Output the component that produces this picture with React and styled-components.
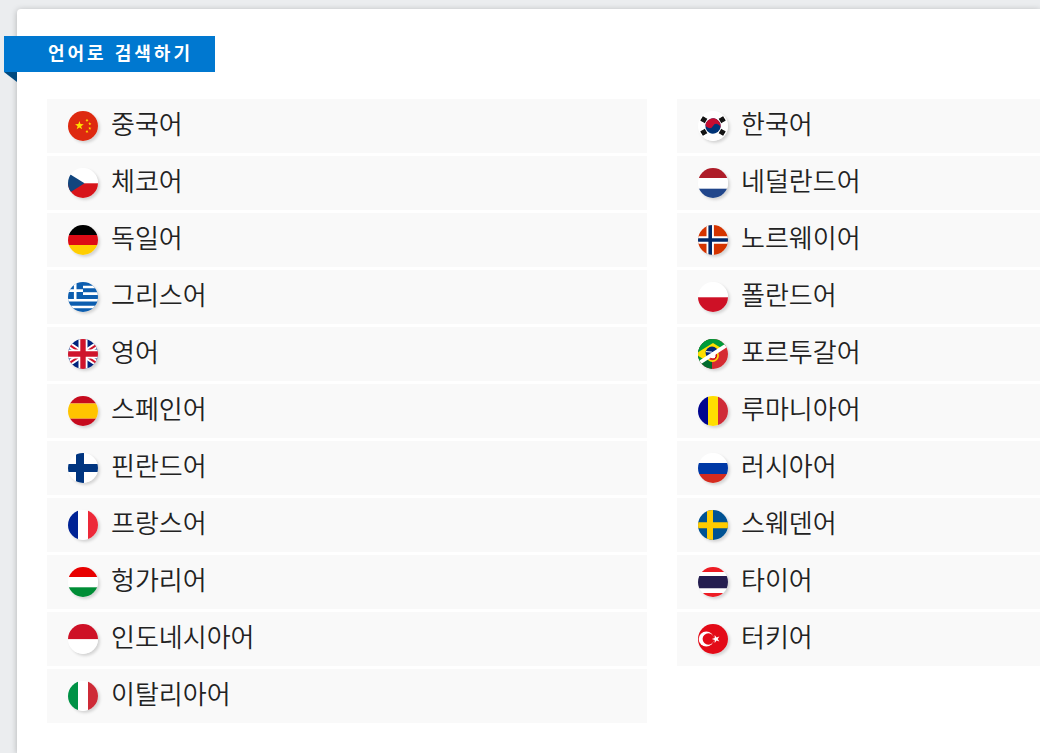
import React from 'react'
import styled, { createGlobalStyle } from 'styled-components'

const GlobalStyle = createGlobalStyle`
  * {
    box-sizing: border-box;
  }

  body {
    margin: 0;
    background-color: #ebedef;
    color: #222;
    font-family: 'Noto Sans CJK KR', 'Noto Sans', sans-serif;
  }
`

const Page = styled.div`
  padding: 9px 0 0 17px;
  overflow: hidden;
`

const Card = styled.main`
  min-height: calc(100vh - 9px);
  padding: 27px 0 30px 30px;
  background-color: #fff;
  border-top-left-radius: 4px;
  box-shadow: 0 1px 6px rgba(0, 0, 0, 0.25);
`

// hangs over the left edge of the card, the fold sits underneath
const Ribbon = styled.h2`
  position: relative;
  width: fit-content;
  height: 36px;
  margin: 0 0 27px -43px;
  padding: 0 22px 0 44px;
  background-color: #0078d0;
  color: #fff;
  font-size: 18px;
  font-weight: 700;
  letter-spacing: 3px;
  line-height: 32px;

  &::after {
    content: '';
    position: absolute;
    top: 100%;
    left: 0;
    border-top: 10px solid #004a80;
    border-left: 13px solid transparent;
  }
`

const Columns = styled.div`
  display: grid;
  grid-template-columns: minmax(0, 600px) minmax(0, 1fr);
  column-gap: 30px;
  align-items: start;
`

const LanguageList = styled.ul`
  display: grid;
  row-gap: 3px;
  margin: 0;
  padding: 0;
  list-style: none;
`

const LanguageLink = styled.a`
  display: flex;
  align-items: center;
  gap: 13px;
  height: 54px;
  padding-left: 21px;
  background-color: #f9f9f9;
  color: inherit;
  text-decoration: none;
`

const LanguageName = styled.span`
  padding-bottom: 6px;
  font-size: 26px;
  font-weight: 350;
  line-height: 36px;
  white-space: nowrap;
`

const FlagIcon = styled.svg`
  flex: none;
  width: 30px;
  height: 30px;
  border-radius: 50%;
  box-shadow: 2px 2px 3px rgba(0, 0, 0, 0.15);
`

const Rows = ({ colors, stops = [10, 20] }) => {
  const edges = [0, ...stops, 30]
  return colors.map((color, i) => (
    <rect key={i} y={edges[i]} width='30' height={edges[i + 1] - edges[i]} fill={color} />
  ))
}

const Bars = ({ colors }) => colors.map((color, i) => (
  <rect key={i} x={i * 10} width='10' height='30' fill={color} />
))

const starPoints = (cx, cy, r, turn = -90) => {
  const points = []
  for (let i = 0; i < 10; i++) {
    const angle = (turn + i * 36) * Math.PI / 180
    const radius = i % 2 ? r * 0.4 : r
    points.push(`${cx + radius * Math.cos(angle)},${cy + radius * Math.sin(angle)}`)
  }
  return points.join(' ')
}

const flags = {
  cn: (
    <>
      <rect width='30' height='30' fill='#de2910' />
      <g fill='#ffde00'>
        <polygon points={starPoints(11.4, 14.6, 4.6)} />
        <polygon points={starPoints(19, 9.5, 1.7, 20)} />
        <polygon points={starPoints(21.8, 12.8, 1.7, 50)} />
        <polygon points={starPoints(21.8, 17.4, 1.7)} />
        <polygon points={starPoints(19, 20.6, 1.7, 20)} />
      </g>
    </>
  ),
  cz: (
    <>
      <Rows colors={['#fff', '#d7141a']} stops={[15.3]} />
      <path d='M-8 0 16.5 15.3-8 31Z' fill='#11457e' />
    </>
  ),
  de: <Rows colors={['#000', '#dd0b15', '#ffce00']} />,
  gr: (
    <>
      <rect width='30' height='30' fill='#0d5eaf' />
      <path d='M15 5h15M15 11.6h15M0 18.3h30M0 25h30M0 8.6h15M7.2 0v17' stroke='#fff' strokeWidth='2.6' />
    </>
  ),
  gb: (
    <>
      <rect width='30' height='30' fill='#00247d' />
      <path d='M-3 3 33 27M33 3-3 27' stroke='#fff' strokeWidth='6' />
      <path d='M-3 3 33 27M33 3-3 27' stroke='#cf142b' strokeWidth='2' />
      <path d='M15 0v30M0 15h30' stroke='#fff' strokeWidth='9' />
      <path d='M15 0v30M0 15h30' stroke='#cf142b' strokeWidth='5.4' />
    </>
  ),
  es: <Rows colors={['#c60b1e', '#ffc400', '#c60b1e']} stops={[7.5, 22.7]} />,
  fi: (
    <>
      <rect width='30' height='30' fill='#fff' />
      <path d='M12 0v30M0 15h30' stroke='#003580' strokeWidth='8' />
    </>
  ),
  fr: <Bars colors={['#002395', '#fff', '#ed2939']} />,
  hu: <Rows colors={['#e80000', '#fff', '#008d36']} stops={[10, 20.3]} />,
  id: <Rows colors={['#ce1126', '#fff']} stops={[15.3]} />,
  it: <Bars colors={['#009246', '#fff', '#ce2b37']} />,
  kr: (
    <>
      <rect width='30' height='30' fill='#fff' />
      <g transform='rotate(28 15 15)'>
        <circle cx='15' cy='15' r='7.7' fill='#003478' />
        <path d='M7.3 15a7.7 7.7 0 0 1 15.4 0a3.85 3.85 0 0 0-7.7 0a3.85 3.85 0 0 1-7.7 0Z' fill='#c60c30' />
      </g>
      <g stroke='#111' strokeWidth='1.7'>
        <path d='M3 10 5.6 5.6M4.5 10.9 7.1 6.5M6 11.8 8.6 7.4' />
        <path d='M27 10 24.4 5.6M25.5 10.9 22.9 6.5M24 11.8 21.4 7.4' />
        <path d='M3 20 5.6 24.4M4.5 19.1 7.1 23.5M6 18.2 8.6 22.6' />
        <path d='M27 20 24.4 24.4M25.5 19.1 22.9 23.5M24 18.2 21.4 22.6' />
      </g>
    </>
  ),
  nl: <Rows colors={['#ae1c28', '#fff', '#21468b']} stops={[10, 20.7]} />,
  no: (
    <>
      <rect width='30' height='30' fill='#d43400' />
      <path d='M12.2 0v30M0 15h30' stroke='#fff' strokeWidth='7.4' />
      <path d='M12.2 0v30M0 15h30' stroke='#002868' strokeWidth='3.6' />
    </>
  ),
  pl: <Rows colors={['#fff', '#ce1126']} stops={[15.3]} />,
  // Brazil above the diagonal, Portugal below it
  pt: (
    <>
      <clipPath id='pt-upper'>
        <path d='M0 0H30V5.2L0 24.8Z' />
      </clipPath>
      <rect width='30' height='30' fill='#d52b32' />
      <rect width='14' height='30' fill='#006b2d' />
      <circle cx='14.5' cy='16.5' r='5.6' fill='#d52b32' stroke='#ffe000' strokeWidth='1.6' />
      <path d='M12 14h6v4q-3 4-6 0Z' fill='#fff' stroke='#d00000' strokeWidth='1' />
      <g clipPath='url(#pt-upper)'>
        <rect width='30' height='30' fill='#009b3a' />
        <path d='M15 4 33 15 15 26-3 15Z' fill='#fedf00' />
        <circle cx='14' cy='14' r='6.4' fill='#002776' />
        <path d='M8 12.6q6-1 10 4' fill='none' stroke='#fff' strokeWidth='1' />
      </g>
      <path d='M-1 25.5 31 4.5' stroke='#fff' strokeWidth='3.8' />
    </>
  ),
  ro: <Bars colors={['#00058f', '#ffde00', '#cf2b37']} />,
  ru: <Rows colors={['#fff', '#0039a6', '#d52b1e']} stops={[10, 21]} />,
  se: (
    <>
      <rect width='30' height='30' fill='#005293' />
      <path d='M12 0v30M0 15.2h30' stroke='#fecb00' strokeWidth='6' />
    </>
  ),
  th: <Rows colors={['#ed1c24', '#fff', '#241d4f', '#fff', '#ed1c24']} stops={[5, 9, 21.5, 26]} />,
  tr: (
    <>
      <rect width='30' height='30' fill='#e30a17' />
      <circle cx='8.3' cy='15' r='7.6' fill='#fff' />
      <circle cx='10.4' cy='15' r='5.8' fill='#e30a17' />
      <polygon points={starPoints(18, 15, 4.2, 180)} fill='#fff' />
    </>
  ),
}

const leftLanguages = [
  ['cn', '중국어'],
  ['cz', '체코어'],
  ['de', '독일어'],
  ['gr', '그리스어'],
  ['gb', '영어'],
  ['es', '스페인어'],
  ['fi', '핀란드어'],
  ['fr', '프랑스어'],
  ['hu', '헝가리어'],
  ['id', '인도네시아어'],
  ['it', '이탈리아어'],
]

const rightLanguages = [
  ['kr', '한국어'],
  ['nl', '네덜란드어'],
  ['no', '노르웨이어'],
  ['pl', '폴란드어'],
  ['pt', '포르투갈어'],
  ['ro', '루마니아어'],
  ['ru', '러시아어'],
  ['se', '스웨덴어'],
  ['th', '타이어'],
  ['tr', '터키어'],
]

const Languages = ({ items }) => (
  <LanguageList>
    {items.map(([code, name]) => (
      <li key={code}>
        <LanguageLink href={`#${code}`}>
          <FlagIcon viewBox='0 0 30 30' aria-hidden='true'>{flags[code]}</FlagIcon>
          <LanguageName>{name}</LanguageName>
        </LanguageLink>
      </li>
    ))}
  </LanguageList>
)

export default function App() {
  return (
    <Page lang='ko'>
      <GlobalStyle />
      <Card>
        <Ribbon>언어로 검색하기</Ribbon>
        <Columns>
          <Languages items={leftLanguages} />
          <Languages items={rightLanguages} />
        </Columns>
      </Card>
    </Page>
  )
}
